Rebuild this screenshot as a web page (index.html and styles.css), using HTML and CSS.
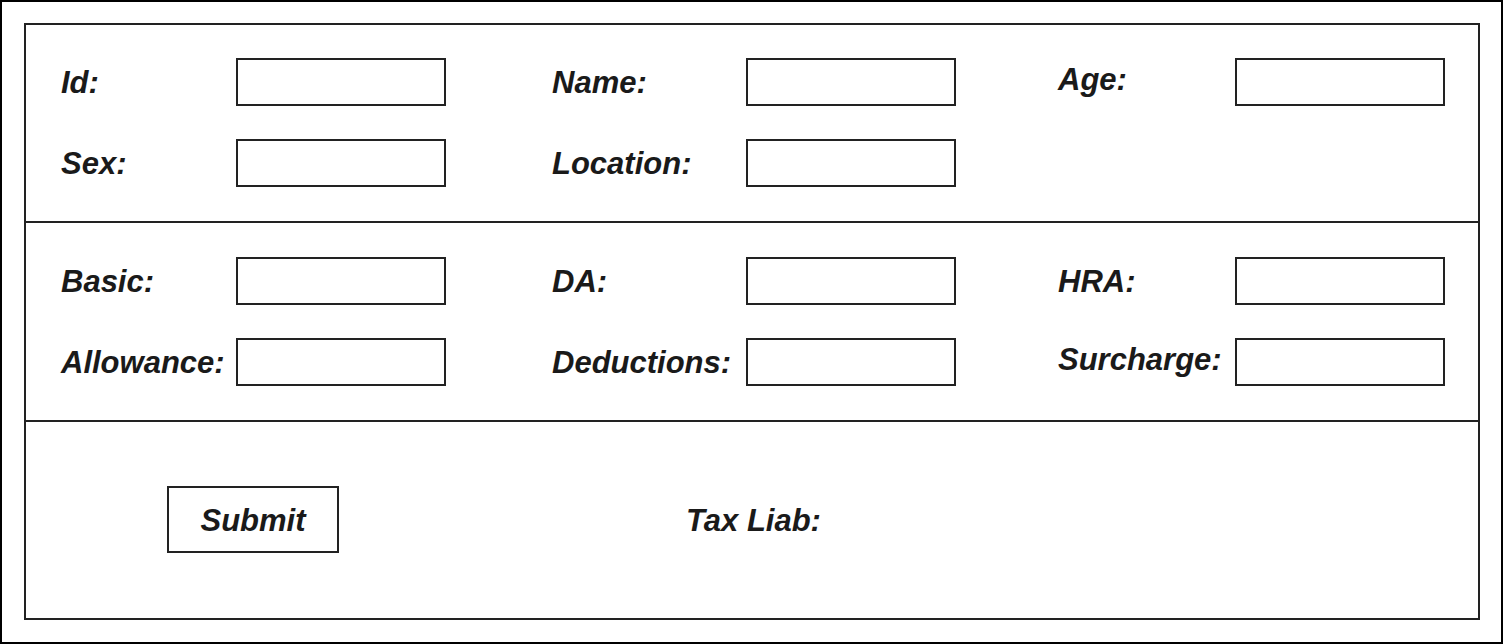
FILE: index.html
```html
<!DOCTYPE html>
<html>
<head>
<meta charset="utf-8">
<link rel="stylesheet" href="styles.css">
</head>
<body>
<div class="frame">
  <div class="form">
    <section class="sec sec-top">
      <div class="row">
        <div class="field c1"><span class="lbl">Id:</span><span class="box"></span></div>
        <div class="field c2"><span class="lbl">Name:</span><span class="box"></span></div>
        <div class="field c3"><span class="lbl lbl-up">Age:</span><span class="box"></span></div>
      </div>
      <div class="row">
        <div class="field c1"><span class="lbl">Sex:</span><span class="box"></span></div>
        <div class="field c2"><span class="lbl">Location:</span><span class="box"></span></div>
      </div>
    </section>
    <section class="sec sec-mid">
      <div class="row">
        <div class="field c1"><span class="lbl">Basic:</span><span class="box"></span></div>
        <div class="field c2"><span class="lbl">DA:</span><span class="box"></span></div>
        <div class="field c3"><span class="lbl">HRA:</span><span class="box"></span></div>
      </div>
      <div class="row">
        <div class="field c1"><span class="lbl">Allowance:</span><span class="box"></span></div>
        <div class="field c2"><span class="lbl">Deductions:</span><span class="box"></span></div>
        <div class="field c3"><span class="lbl lbl-up">Surcharge:</span><span class="box"></span></div>
      </div>
    </section>
    <section class="sec sec-bot">
      <div class="btn">Submit</div>
      <span class="lbl tax">Tax Liab:</span>
    </section>
  </div>
</div>
</body>
</html>
```

FILE: styles.css
```css
html, body {
  margin: 0;
  padding: 0;
  background: #fff;
}
body {
  font-family: "Liberation Sans", Arial, sans-serif;
  color: #1a1a1a;
}
.frame {
  box-sizing: border-box;
  width: 1503px;
  height: 644px;
  border: 2px solid #000;
  padding: 21px 22px 0 22px;
}
.form {
  box-sizing: border-box;
  width: 1456px;
  height: 597px;
  border: 2px solid #222;
  display: flex;
  flex-direction: column;
}
.sec {
  box-sizing: border-box;
}
.sec-top {
  height: 196px;
  padding: 33px 0 0 35px;
}
.sec-mid {
  height: 199px;
  border-top: 2px solid #222;
  padding: 34px 0 0 35px;
}
.sec-bot {
  flex: 1;
  border-top: 2px solid #222;
  padding: 64px 0 0 141px;
  display: flex;
  align-items: flex-start;
}
.row {
  display: flex;
  height: 48px;
  margin-bottom: 33px;
}
.field {
  display: flex;
  align-items: center;
}
.c1 { margin-right: 106px; }
.c1 .lbl { width: 175px; }
.c2 { margin-right: 102px; }
.c2 .lbl { width: 194px; }
.c3 .lbl { width: 177px; }
.lbl {
  font-weight: bold;
  font-style: italic;
  font-size: 31px;
  line-height: 36px;
  white-space: nowrap;
  position: relative;
  top: 1px;
}
.lbl-up {
  top: -2px;
}
.box {
  box-sizing: border-box;
  width: 210px;
  height: 48px;
  border: 2px solid #222;
  background: #fff;
}
.btn {
  box-sizing: border-box;
  width: 172px;
  height: 67px;
  border: 2px solid #222;
  display: flex;
  align-items: center;
  justify-content: center;
  font-weight: bold;
  font-style: italic;
  font-size: 31px;
  padding-top: 2px;
}
.tax {
  margin-left: 347px;
  margin-top: 16px;
}
```
